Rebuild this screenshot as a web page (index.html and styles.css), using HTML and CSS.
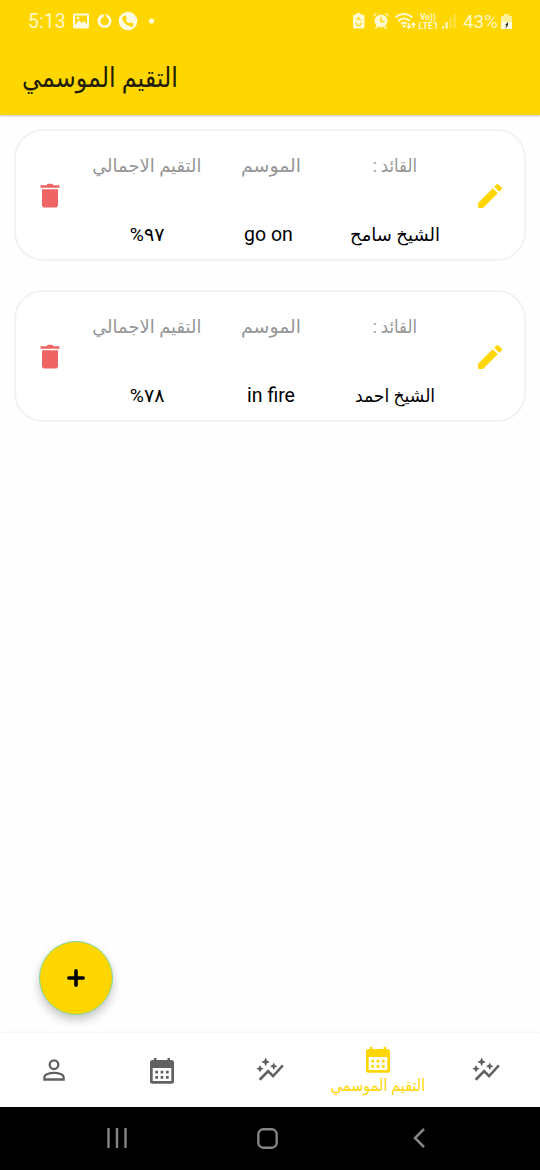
FILE: index.html
```html
<!DOCTYPE html>
<html lang="ar">
<head>
<meta charset="utf-8">
<title>التقيم الموسمي</title>
<link rel="stylesheet" href="styles.css">
</head>
<body>
<svg class="defs" width="0" height="0">
  <symbol id="pencil" viewBox="0 0 24 24"><path d="M3 17.250V20q0 1 1 1h2.750L17.810 9.940l-3.750-3.750L3 17.250zM20.710 7.040a1 1 0 0 0 0-1.410l-2.340-2.340a1 1 0 0 0-1.410 0l-1.830 1.830 3.750 3.750 1.830-1.830z"/></symbol>
  <symbol id="trash" viewBox="0 0 20 24"><path d="M.5 1.700h6Q7 .2 8.500 .2h3Q13 .2 13.500 1.700h6v2.500H.5zM2 5.700h16v15.500q0 2.800-2.800 2.800H4.800Q2 24 2 21.200z"/></symbol>
  <symbol id="graph" viewBox="0 0 24 24"><path d="M14.060 9.940L12 9l2.060-.94L15 6l.94 2.060L18 9l-2.060.94L15 12zM4 14l.94-2.060L7 11l-2.060-.94L4 8l-.94 2.060L1 11l2.060.94zM8.500 9l1.090-2.410L12 5.500 9.590 4.410 8.500 2 7.410 4.410 5 5.500l2.410 1.090zM4.500 20.500l6-6.010 4 4L23 8.930l-1.410-1.410-7.090 7.970-4-4L3 19z"/></symbol>
  <symbol id="calendar" viewBox="0 0 24 27"><path fill-rule="evenodd" d="M4 3V1h2.500v2h11V1H20v2h1.500Q24 3 24 5.500v18.700q0 2.500-2.500 2.500h-19Q0 26.700 0 24.200V5.500Q0 3 2.500 3zM2.700 11v13h18.600V11zM5.300 13.800H8v2.700H5.300zm5.300 0h2.700v2.700h-2.700zm5.400 0h2.700v2.700H16zM5.300 19H8v2.700H5.300zm5.300 0h2.700v2.700h-2.700zm5.400 0h2.700v2.700H16z"/></symbol>
</svg>
<main class="screen">
  <header class="top">
    <div class="status">
      <span class="clock">5:13</span>
      <svg class="left-icons" width="84" height="22" viewBox="0 0 84 22" fill="#fffbe0">
        <path fill-rule="evenodd" d="M1.500 2.500h13q1.500 0 1.500 1.500v12q0 1.500-1.500 1.500h-13Q0 17.500 0 16V4Q0 2.500 1.500 2.500zM2 4.500v9.500l4-5 3 3 2-2 3 3V4.500zm3 1.200a1.400 1.400 0 1 1 0 2.800 1.400 1.400 0 0 1 0-2.800z"/>
        <path fill-rule="evenodd" d="M30 3a7 7 0 1 0 8.500 7.300c0-4-3-6.800-7-7.300 1.500 1 2 2 2 3.200a4.300 4.300 0 1 1-3.500 0c1-.4 1.500-1.500 0-3.200z"/>
        <circle cx="55" cy="10" r="9.300"/>
        <path fill="#ffd600" d="M50.500 5l2-.5 1.500 3-1.300 1.500q1 2.500 3.500 3.500l1.500-1.300 3 1.600-.5 2q-1 1.200-3 .7-6-2-8-7.500-.2-2 1.300-3z"/>
        <circle cx="78.500" cy="10" r="2.600"/>
      </svg>
      <svg class="right-icons" width="106" height="22" viewBox="0 0 106 22" fill="#fff9d0">
        <path d="M4.500 3.500V2h4v1.500h2q2 0 2 2V16q0 1.500-1.500 1.500H2.500Q1 17.500 1 16V5.500q0-2 2-2z"/>
        <path fill="none" stroke="#ffd600" stroke-width="1.200" d="M4.500 9.500l2-3 2 3M4 11.500l1.500 3h2.500l1.500-3"/>
        <circle cx="29" cy="10" r="6.500"/><path d="M21.500 6q0-4 4-4zM32.500 2q4 0 4 4zM24.500 15l-2 2.500h2l2-1.500zM33.500 15l2 2.500h-2l-2-1.500z"/>
        <path fill="none" stroke="#ffd600" stroke-width="1.300" d="M29 6v4.500h3.500"/>
        <g fill="none" stroke="#fff9d0" stroke-width="1.700"><path d="M43.500 6.500q8-7 17 0M46 10q6-5 12 0M49 13q3-2.500 6 0"/><path stroke-width="1.500" d="M57 12v5m-2-2 2 2 2-2M61.500 17v-5m-2 2 2-2 2 2"/></g>
        <path d="M50 15l2-1.500 2 1.500-2 2z"/>
        <text x="68" y="8.500" class="volte" textLength="16" lengthAdjust="spacingAndGlyphs">Vo))</text>
        <text x="66.500" y="17.500" class="volte" textLength="20" lengthAdjust="spacingAndGlyphs">LTE1</text>
        <path d="M90 15h2v2.500h-2zM93.500 11h2.200v6.500h-2.200z"/><path opacity=".35" d="M97.500 6.500h2.200v11h-2.200zM101.500 3h2.200v14.500h-2.200z"/>
      </svg>
      <span class="percent">43%</span>
      <svg class="battery" width="11" height="18" viewBox="0 0 11 18"><path fill="#ffef98" d="M3 3V1h5v2h3v7H0V3z"/><path fill="#fffbe0" d="M0 9h11v7H0z"/><path fill="#333" d="M7 9L4 12h1.500l-1.500 4L7 12.500z"/></svg>
    </div>
    <h1 class="title"><span class="fit fit-title">التقيم الموسمي</span></h1>
  </header>
  <section class="list">
    <article class="card">
      <svg class="trash"><use href="#trash"/></svg>
      <div class="col"><span class="label"><span class="fit fit-total">التقيم الاجمالي</span></span><span class="value"><span class="fit num"><bdi>%</bdi><bdi>٩٧</bdi></span></span></div>
      <div class="col"><span class="label"><span class="fit fit-season">الموسم</span></span><span class="value latin go">go on</span></div>
      <div class="col"><span class="label"><span class="fit fit-leader" dir="rtl">القائد :</span></span><span class="value"><span class="fit fit-sameh">الشيخ سامح</span></span></div>
      <svg class="pencil"><use href="#pencil"/></svg>
    </article>
    <article class="card">
      <svg class="trash"><use href="#trash"/></svg>
      <div class="col"><span class="label"><span class="fit fit-total">التقيم الاجمالي</span></span><span class="value"><span class="fit num"><bdi>%</bdi><bdi>٧٨</bdi></span></span></div>
      <div class="col"><span class="label"><span class="fit fit-season">الموسم</span></span><span class="value latin fire">in fire</span></div>
      <div class="col"><span class="label"><span class="fit fit-leader" dir="rtl">القائد :</span></span><span class="value"><span class="fit fit-ahmed">الشيخ احمد</span></span></div>
      <svg class="pencil"><use href="#pencil"/></svg>
    </article>
  </section>
  <button class="fab" aria-label="إضافة"><svg width="18" height="18"><path d="M9 1.800v14.400M1.800 9h14.400" stroke="#000" stroke-width="3.600" stroke-linecap="round"/></svg></button>
  <nav class="tabs">
    <a class="tab"><svg width="22" height="22" viewBox="0 0 22 22" fill="none" stroke="#616161" stroke-width="2.300"><circle cx="11" cy="5.700" r="4.300"/><path d="M1.400 20.500v-2.500c0-2.500 5-4.200 9.600-4.200s9.600 1.700 9.600 4.200v2.500z"/></svg></a>
    <a class="tab"><svg class="cal"><use href="#calendar"/></svg></a>
    <a class="tab"><svg class="graph"><use href="#graph"/></svg></a>
    <a class="tab active"><svg class="cal"><use href="#calendar"/></svg><span class="tab-label"><span class="fit fit-tab">التقيم الموسمي</span></span></a>
    <a class="tab"><svg class="graph"><use href="#graph"/></svg></a>
  </nav>
  <footer class="system">
    <svg width="20" height="20" viewBox="0 0 20 20"><path d="M1.500 0v20M10 0v20M18.500 0v20" stroke="#858585" stroke-width="2.400"/></svg>
    <svg width="21" height="21" viewBox="0 0 21 21"><rect x="1.300" y="1.300" width="18.400" height="18.400" rx="5" fill="none" stroke="#858585" stroke-width="2.400"/></svg>
    <svg width="12" height="20" viewBox="0 0 12 20"><path d="M11 1L2 10l9 9" fill="none" stroke="#858585" stroke-width="2.500"/></svg>
  </footer>
</main>
</body>
</html>
```
FILE: styles.css
```css
* { box-sizing: border-box; }
body { margin: 0; background: #fff; font-family: Roboto, "DejaVu Sans", sans-serif; }
.defs { display: block; height: 0; }
.screen { position: relative; display: flex; flex-direction: column; width: 540px; height: 1170px; overflow: hidden; background: #fefefe; }
.top { height: 115px; background: #ffd600; box-shadow: 0 1px 2px rgba(0,0,0,.25); }
.status { display: flex; align-items: center; height: 43px; padding-left: 28px; color: #fff8c4; }
.clock { width: 45px; font-size: 19.500px; }
.left-icons { flex: none; }
.right-icons { flex: none; margin-left: 195px; }
.volte { font: 700 9px Roboto, sans-serif; }
.percent { width: 37px; margin-left: 5px; font-size: 19px; letter-spacing: -.2px; }
.battery { flex: none; margin-left: 1px; }
.title { display: flex; margin: 0; padding-left: 22px; height: 68px; align-items: center; color: #221d08; font-weight: 400; font-size: 25px; }
.fit { display: inline-block; white-space: nowrap; }
.fit-title { transform: scale(.955, 1.08); transform-origin: left; }
.fit-total { transform: scale(1.055, 1.08); }
.fit-season { transform: scale(1.11, 1.08); }
.fit-leader { transform: scale(.97, 1.08); }
.fit-ahmed { transform: scaleX(.955); }
.fit-tab { transform: scale(.965, 1.1); }
.num { transform: scale(1.07, 1.05); }
.list { display: flex; flex-direction: column; gap: 29px; padding: 14px 14px 0; flex: 1; }
.card { display: flex; align-items: center; height: 132px; padding: 1px 21px 0 24px; background: #fff; border: 2px solid #f2f2f2; border-radius: 29px; }
.trash { width: 20px; height: 25px; fill: #ef6464; flex: none; }
.pencil { width: 32px; height: 32px; fill: #ffd600; flex: none; margin-right: -3px; margin-left: auto; }
.col { display: flex; flex-direction: column; align-items: center; width: 124px; height: 100%; }
.trash + .col { margin-left: 25px; }
.label, .value { display: flex; align-items: center; justify-content: center; height: 30px; }
.label { margin-top: 19px; color: #969696; font-size: 17px; }
.value { margin-top: 38px; color: #000; font-size: 18px; }
.latin { font-size: 19.500px; }
.go { padding-right: 5px; }
.fab { position: absolute; left: 39px; top: 941px; display: flex; align-items: center; justify-content: center; width: 74px; height: 74px; padding: 0; background: #ffd600; border: 1px solid #7fd9a0; border-radius: 50%; box-shadow: 0 5px 10px rgba(0,0,0,.22); }
.tabs { display: grid; grid-template-columns: repeat(5, 1fr); height: 74px; background: #fff; box-shadow: 0 -1px 2px rgba(0,0,0,.05); }
.tab { display: flex; flex-direction: column; align-items: center; justify-content: center; }
.cal { width: 24px; height: 27px; fill: #616161; }
.graph { width: 30px; height: 30px; fill: #616161; }
.active { padding-top: 3px; }
.active .cal { fill: #ffd600; }
.tab-label { height: 25px; line-height: 27px; color: #ffd600; font-size: 15px; }
.system { display: grid; grid-template-columns: 234px 67px 236px; justify-items: center; align-items: center; height: 63px; padding-bottom: 1px; background: #000; }
```
